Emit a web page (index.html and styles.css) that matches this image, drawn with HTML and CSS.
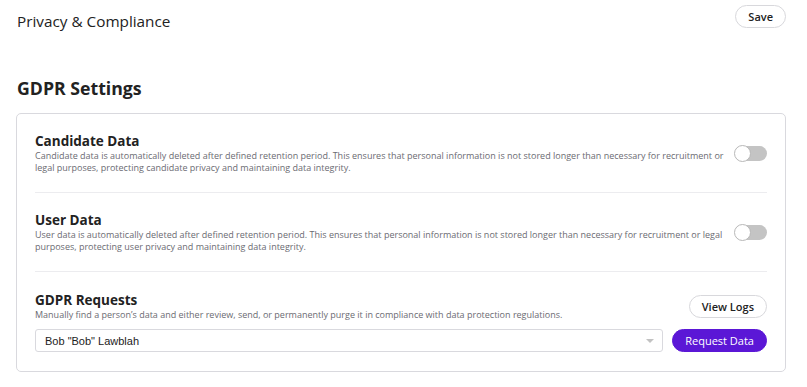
FILE: index.html
```html
<!DOCTYPE html>
<html>
    <head>
        <meta charset="UTF-8">
        <meta name="viewport" content="width=device-width, initial-scale=1.0">
        <title>Privacy &amp; Compliance</title>
        <link rel="stylesheet" href="styles.css">
    </head>
    <body>
        <div class="page-header">
            <h1 class="page-title">Privacy &amp; Compliance</h1>
            <button class="btn btn-outline">Save</button>
        </div>

        <h2 class="section-title">GDPR Settings</h2>

        <div class="card">
            <div class="setting-row">
                <div class="setting-text">
                    <h3>Candidate Data</h3>
                    <p>Candidate data is automatically deleted after defined retention period. This ensures that personal information is not stored longer than necessary for recruitment or legal purposes, protecting candidate privacy and maintaining data integrity.</p>
                </div>
                <span class="toggle"><span class="knob"></span></span>
            </div>

            <div class="setting-row">
                <div class="setting-text">
                    <h3>User Data</h3>
                    <p>User data is automatically deleted after defined retention period. This ensures that personal information is not stored longer than necessary for recruitment or legal purposes, protecting user privacy and maintaining data integrity.</p>
                </div>
                <span class="toggle"><span class="knob"></span></span>
            </div>

            <div class="setting-row requests">
                <div class="requests-head">
                    <div class="setting-text">
                        <h3>GDPR Requests</h3>
                        <p>Manually find a person’s data and either review, send, or permanently purge it in compliance with data protection regulations.</p>
                    </div>
                    <button class="btn btn-outline">View Logs</button>
                </div>
                <div class="requests-form">
                    <div class="select">
                        <span>Bob "Bob" Lawblah</span>
                        <span class="caret"></span>
                    </div>
                    <button class="btn btn-primary">Request Data</button>
                </div>
            </div>
        </div>
    </body>
</html>
```

FILE: styles.css
```css
body {
    margin: 0;
    padding: 0 16px 0 16px;
    font-family: 'Open Sans', sans-serif;
    color: #222222;
    background-color: white;
}

.page-header {
    display: flex;
    justify-content: space-between;
    align-items: flex-start;
    padding: 5px 5px 0 1px;
}

.page-title {
    margin: 5px 0 0 0;
    font-size: 15.3px;
    font-weight: 400;
    line-height: 22px;
}

.btn {
    font-family: 'Open Sans', sans-serif;
    font-weight: 600;
    font-size: 11px;
    height: 23px;
    border-radius: 12px;
    padding: 0 12px;
    cursor: pointer;
}

.btn-outline {
    background-color: white;
    border: 1px solid #d8d8dc;
    color: #222222;
}

.btn-primary {
    background-color: #5b17d6;
    border: 1px solid #5b17d6;
    color: white;
    font-weight: 500;
    font-size: 11px;
    padding: 0 12px;
}

.section-title {
    margin: 44px 0 0 1px;
    font-size: 17.7px;
    font-weight: 700;
    line-height: 24px;
}

.card {
    margin-top: 13px;
    width: 770px;
    border: 1px solid #d9d9de;
    border-radius: 5px;
    padding: 0 18px;
    box-sizing: border-box;
}

.setting-row {
    display: flex;
    align-items: center;
    justify-content: space-between;
    padding: 18px 0;
    border-bottom: 1px solid #ececef;
}

.setting-row:last-child {
    border-bottom: none;
}

.setting-text h3 {
    margin: 0;
    font-size: 13.5px;
    font-weight: 700;
    line-height: 18px;
}

.setting-text p {
    margin: 0;
    font-size: 9px;
    line-height: 12px;
    color: #6b6b72;
    max-width: 696px;
}

.toggle {
    position: relative;
    display: inline-block;
    width: 32px;
    height: 15px;
    border-radius: 8px;
    background-color: #c4c4c4;
    flex-shrink: 0;
}

.knob {
    position: absolute;
    left: -1px;
    top: -1px;
    width: 15px;
    height: 15px;
    border-radius: 50%;
    background-color: white;
    border: 1px solid #b8b8b8;
}

.requests {
    display: block;
    padding-top: 19px;
    padding-bottom: 19px;
}

.requests-head {
    display: flex;
    justify-content: space-between;
    align-items: center;
}

.requests-form {
    display: flex;
    align-items: center;
    gap: 9px;
    margin-top: 8px;
}

.select {
    flex: 1;
    height: 23px;
    border: 1px solid #d9d9de;
    border-radius: 3px;
    box-sizing: border-box;
    display: flex;
    align-items: center;
    justify-content: space-between;
    padding: 0 8px 0 9px;
    font-family: 'Liberation Sans', Arial, sans-serif;
    font-size: 11px;
    color: #222222;
}

.caret {
    width: 0;
    height: 0;
    border-left: 4px solid transparent;
    border-right: 4px solid transparent;
    border-top: 4px solid #c2c2c2;
}
```
